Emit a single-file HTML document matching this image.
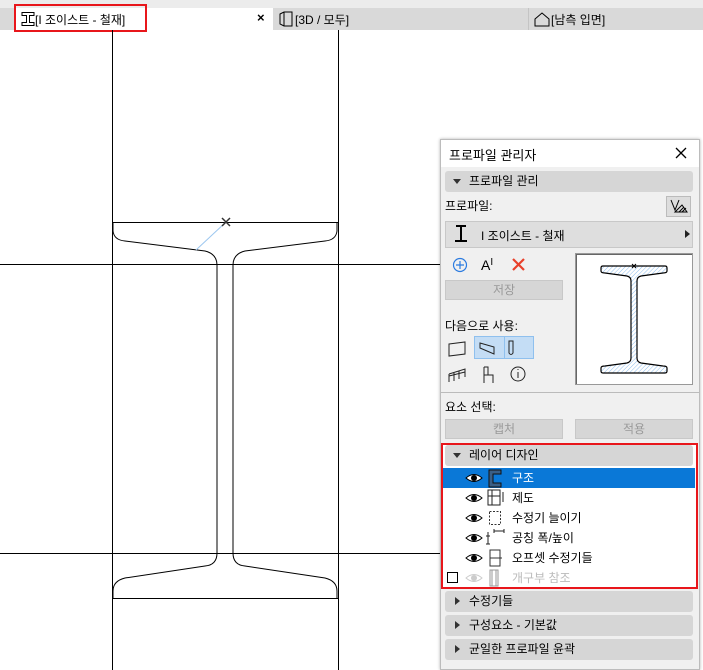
<!DOCTYPE html>
<html><head><meta charset="utf-8"><style>
*{box-sizing:border-box;margin:0;padding:0}
body{width:703px;height:670px;overflow:hidden;background:#fff;font-family:"Liberation Sans","Noto Sans CJK KR",sans-serif;font-size:12px;color:#000;position:relative}
.a{position:absolute}
.hdr{position:absolute;left:445px;width:248px;height:21px;background:#d6d6d6;border-radius:3px;font-size:12px;line-height:21px;padding-left:24px}
.hdr:before{content:"";position:absolute;left:8px;top:8px;border-left:4px solid transparent;border-right:4px solid transparent;border-top:5px solid #333}
.hdr.c:before{left:10px;top:6px;border-top:4px solid transparent;border-bottom:4px solid transparent;border-left:5px solid #333;border-right:0}
.btn{position:absolute;height:20px;background:#d6d6d6;border:1px solid #c8c8c8;color:#999;text-align:center;line-height:18px}
.row{position:absolute;left:442px;width:253px;height:20px;line-height:20px;font-size:12px}
.row span{position:absolute;left:70px}
</style></head><body>
<div class="a" style="left:0;top:0;width:703px;height:8px;background:#ececec"></div>
<div class="a" style="left:0;top:8px;width:703px;height:22px;background:#d9d9d9"></div>
<div class="a" style="left:14px;top:8px;width:259px;height:22px;background:#fff"></div>
<div class="a" style="left:528px;top:8px;width:1px;height:22px;background:#c4c4c4"></div>
<div class="a" style="left:14px;top:4px;width:133px;height:28px;border:2px solid #e8161b"></div>
<svg class="a" style="left:20px;top:11px" width="16" height="16"><path d="M2 1.5h12v3H9.5v7H14v3H2v-3h4.5v-7H2z" fill="none" stroke="#000"/></svg>
<div class="a" style="left:35px;top:11px;font-size:12px">[I 조이스트 - 철재]</div>
<div class="a" style="left:257px;top:10px;font-size:13px;font-weight:bold">×</div>
<svg class="a" style="left:278px;top:11px" width="16" height="16"><path d="M2 3l4-2h8v14H6l-4-2z M6 1v14" fill="none" stroke="#000"/></svg>
<div class="a" style="left:295px;top:11px">[3D / 모두]</div>
<svg class="a" style="left:534px;top:11px" width="16" height="16"><path d="M1 8L8 2l7 6v7H1z" fill="none" stroke="#000"/></svg>
<div class="a" style="left:551px;top:11px">[남측 입면]</div>
<svg class="a" style="left:0;top:30px" width="703" height="640">
<g stroke="#000" stroke-width="1" fill="none">
<path d="M112.5 0V640M338.5 0V640"/>
<path d="M112 192.5H338M0 234.5H440M0 523.5H440M112 568.5H338"/>
<path d="M113 193v8q1 9 12 10l80 10q12 3 12 14v288q0 12-12 13l-80 12q-12 3-12 13v7"/>
<path d="M337 193v8q-1 9-12 10l-80 10q-12 3-12 14v288q0 12 12 13l80 12q12 3 12 13v7"/>
</g>
<path d="M226 192L196 220" stroke="#9cc7f0"/>
<path d="M222 188l8 8M230 188l-8 8" stroke="#333" stroke-width="1.5"/>
</svg>
<div class="a" style="left:440px;top:139px;width:260px;height:531px;background:#f0f0f0;border:1px solid #bcbcbc;box-shadow:0 0 3px rgba(0,0,0,.3)"></div>
<div class="a" style="left:441px;top:140px;width:258px;height:27px;background:#fff"></div>
<div class="a" style="left:449px;top:145px;font-size:13px">프로파일 관리자</div>
<svg class="a" style="left:675px;top:147px" width="12" height="12"><path d="M1 1l10 10M11 1L1 11" stroke="#000" stroke-width="1.3"/></svg>
<div class="hdr" style="top:171px">프로파일 관리</div>
<div class="a" style="left:445px;top:197px">프로파일:</div>
<div class="a" style="left:666px;top:196px;width:25px;height:21px;background:#ddd;border:1px solid #bbb"></div>
<svg class="a" style="left:669px;top:198px" width="20" height="17"><path d="M2 2l4 10 4-10M6 14h12l-5-7z" fill="none" stroke="#000"/><path d="M10 14l5-5M13 14l4-4" stroke="#000"/></svg>
<div class="a" style="left:445px;top:221px;width:248px;height:27px;background:#dedede;border:1px solid #c8c8c8"></div>
<svg class="a" style="left:452px;top:224px" width="18" height="20"><path d="M4 2h10M9 2v15M3 17h12" stroke="#000" stroke-width="2"/></svg>
<div class="a" style="left:481px;top:227px;font-size:12px">I 조이스트 - 철재</div>
<div class="a" style="left:685px;top:230px;border-top:4px solid transparent;border-bottom:4px solid transparent;border-left:5px solid #222"></div>
<svg class="a" style="left:452px;top:257px" width="16" height="16"><circle cx="8" cy="8" r="6.5" fill="none" stroke="#2b7be0" stroke-width="1.2"/><path d="M8 4v8M4 8h8" stroke="#2b7be0" stroke-width="1.2"/></svg>
<div class="a" style="left:481px;top:257px;font-size:14px">A<span style="font-size:10px;vertical-align:top">I</span></div>
<svg class="a" style="left:511px;top:257px" width="15" height="15"><path d="M2 2l11 11M13 2L2 13" stroke="#e8402a" stroke-width="2.2"/></svg>
<div class="btn" style="left:445px;top:280px;width:118px">저장</div>
<div class="a" style="left:445px;top:317px">다음으로 사용:</div>
<div class="a" style="left:474px;top:336px;width:60px;height:23px;background:#c4ddf5;border:1px solid #8fc0ee"></div>
<div class="a" style="left:504px;top:336px;width:1px;height:23px;background:#8fc0ee"></div>
<svg class="a" style="left:446px;top:338px" width="90" height="56" fill="none" stroke="#222">
<path d="M3 6l16-2v12L3 18z"/><path d="M34 5l14 4v7l-14-6z"/><path d="M63 3h4v12q-2 3-4 0z"/>
<path d="M3 36l16-5v8M3 36v8M8 35v8M13 33v8M3 38l16-4"/><path d="M38 29h4v8h5v8M38 29v16M38 37h9"/><circle cx="72" cy="36" r="7"/><path d="M72 34v6M72 31v1"/></svg>
<div class="a" style="left:575px;top:253px;width:118px;height:132px;background:#fff;border:1px solid #999;box-shadow:inset 1px 1px 0 #666"></div>
<svg class="a" style="left:575px;top:253px" width="118" height="132">
<defs><pattern id="h" width="3" height="3" patternUnits="userSpaceOnUse" patternTransform="rotate(45)"><path d="M0 0v3" stroke="#8fbfef" stroke-width="1"/></pattern></defs>
<path d="M28 13h62q2 0 2 2v3q0 2-4 2l-22 3q-4 1-4 5V105q0 4 4 5l22 3q4 0 4 2v3q0 2-2 2H28q-2 0-2-2v-3q0-2 4-2l22-3q4-1 4-5V28q0-4-4-5l-22-3q-4 0-4-2v-3q0-2 2-2z" fill="url(#h)" stroke="#000" stroke-width="1.2"/>
<path d="M57 11l4 4M61 11l-4 4" stroke="#000"/></svg>
<div class="a" style="left:441px;top:392px;width:258px;height:1px;background:#bbb"></div>
<div class="a" style="left:445px;top:398px">요소 선택:</div>
<div class="btn" style="left:445px;top:419px;width:118px">캡처</div>
<div class="btn" style="left:575px;top:419px;width:118px">적용</div>
<div class="a" style="left:441px;top:443px;width:256px;height:146px;background:#fff"></div>
<div class="hdr" style="top:445px">레이어 디자인</div>
<div class="row" style="top:468px;background:#0a78d7;color:#fff"><span>구조</span></div>
<div class="row" style="top:488px"><span>제도</span></div>
<div class="row" style="top:508px"><span>수정기 늘이기</span></div>
<div class="row" style="top:528px"><span>공칭 폭/높이</span></div>
<div class="row" style="top:548px"><span>오프셋 수정기들</span></div>
<div class="row" style="top:568px;color:#bbb"><span>개구부 참조</span></div>
<svg class="a" style="left:442px;top:468px" width="70" height="120">
<g><path d="M24 10q8-7 16 0q-8 7-16 0z" stroke="#000" fill="#fff"/><circle cx="32" cy="10" r="3"/></g>
<g transform="translate(0,20)"><path d="M24 10q8-7 16 0q-8 7-16 0z" stroke="#000" fill="#fff"/><circle cx="32" cy="10" r="3"/></g>
<g transform="translate(0,40)"><path d="M24 10q8-7 16 0q-8 7-16 0z" stroke="#000" fill="#fff"/><circle cx="32" cy="10" r="3"/></g>
<g transform="translate(0,60)"><path d="M24 10q8-7 16 0q-8 7-16 0z" stroke="#000" fill="#fff"/><circle cx="32" cy="10" r="3"/></g>
<g transform="translate(0,80)"><path d="M24 10q8-7 16 0q-8 7-16 0z" stroke="#000" fill="#fff"/><circle cx="32" cy="10" r="3"/></g>
<g transform="translate(0,100)"><path d="M24 10q8-7 16 0q-8 7-16 0z" stroke="#ccc" fill="#fff"/><circle cx="32" cy="10" r="3" fill="#ccc"/></g>
<rect x="5.5" y="104.5" width="10" height="10" fill="#fff" stroke="#000"/>
<path d="M47 2h12v4h-8v9h8v4H47z" fill="#3a5f86" stroke="#111"/>
<path d="M46 22h12v15H46zM46 28h12M50 22v15M61 24v10" fill="none" stroke="#222"/>
<rect x="47.5" y="43.5" width="11" height="13" fill="none" stroke="#333" stroke-dasharray="2,1.5"/>
<path d="M46 64v12M44 68h4M44 76h4M52 63h10M52 61v4M62 61v4" stroke="#222" fill="none"/>
<path d="M48 82h10v16H48zM48 90h12" stroke="#333" fill="none"/>
<path d="M48 102h8v16h-8zM50 102v16M54 102v16" stroke="#999" fill="none"/>
</svg>
<div class="a" style="left:441px;top:443px;width:257px;height:146px;border:2px solid #e8161b"></div>
<div class="hdr c" style="top:591px">수정기들</div>
<div class="hdr c" style="top:615px">구성요소 - 기본값</div>
<div class="hdr c" style="top:639px">균일한 프로파일 윤곽</div>
</body></html>
